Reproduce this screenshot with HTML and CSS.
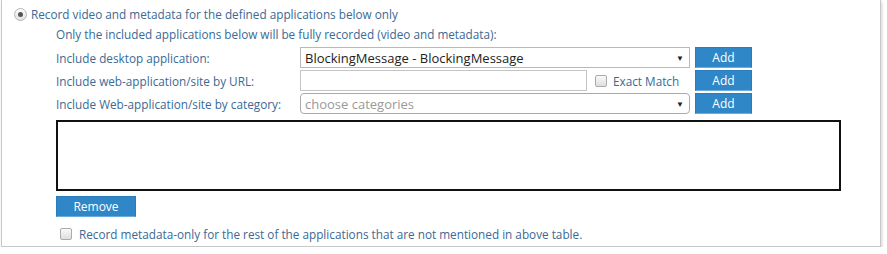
FILE: index.html
```html
<!DOCTYPE html>
<html lang="en">
<head>
  <meta charset="UTF-8" />
  <title>Recording settings</title>
  <link rel="stylesheet" href="styles.css">
</head>
<body>
  <div class="panel">
    <label class="option">
      <span class="radio"><span class="dot"></span></span>
      Record video and metadata for the defined applications below only
    </label>

    <div class="section">
      <p class="note">Only the included applications below will be fully recorded (video and metadata):</p>

      <div class="row">
        <span class="label">Include desktop application:</span>
        <div class="select">
          <span>BlockingMessage - BlockingMessage</span>
          <span class="arrow">&#9660;</span>
        </div>
        <button class="btn add">Add</button>
      </div>

      <div class="row">
        <span class="label">Include web-application/site by URL:</span>
        <input type="text" class="url" />
        <label class="exact"><span class="check"></span>Exact Match</label>
        <button class="btn add">Add</button>
      </div>

      <div class="row">
        <span class="label">Include Web-application/site by category:</span>
        <div class="select rounded">
          <span class="placeholder">choose categories</span>
          <span class="arrow">&#9660;</span>
        </div>
        <button class="btn add">Add</button>
      </div>

      <div class="list"></div>

      <button class="btn remove">Remove</button>

      <label class="meta">
        <span class="check"></span>
        Record metadata-only for the rest of the applications that are not mentioned in above table.
      </label>
    </div>
  </div>
</body>
</html>
```

FILE: styles.css
```css
body {
  margin: 0;
  background: #fff;
  font-family: 'Open Sans', sans-serif;
  font-size: 11.75px;
  color: #3a6a95;
}

.panel {
  margin-left: 1px;
  width: 880px;
  height: 247px;
  box-sizing: border-box;
  border: 1px solid #c8c8c8;
  border-top: none;
  box-shadow: 1px 2px 3px rgba(0, 0, 0, 0.18);
  padding-top: 5px;
}

.option {
  display: flex;
  align-items: center;
  height: 18px;
  padding-left: 12px;
  white-space: nowrap;
}

.radio {
  width: 11px;
  height: 11px;
  border: 1px solid #b5b5b5;
  border-radius: 50%;
  background: linear-gradient(#fdfdfd, #e2e2e2);
  display: flex;
  align-items: center;
  justify-content: center;
  margin-right: 4px;
}

.dot {
  width: 5px;
  height: 5px;
  border-radius: 50%;
  background: #555;
}

.section {
  padding-left: 54px;
}

.note {
  margin: 2px 0 4px;
  height: 18px;
  line-height: 18px;
}

.row {
  display: flex;
  align-items: center;
  height: 21px;
  margin-bottom: 2px;
}

.label {
  width: 244px;
  flex: none;
  white-space: nowrap;
}

.select {
  width: 390px;
  height: 21px;
  box-sizing: border-box;
  border: 1px solid #b9b9b9;
  display: flex;
  align-items: center;
  justify-content: space-between;
  padding: 0 5px 0 4px;
  color: #222;
  font-size: 13px;
}

.select.rounded {
  border-radius: 4px;
  border-color: #aaa;
}

.placeholder {
  color: #999;
}

.arrow {
  font-size: 8px;
  color: #222;
}

.url {
  width: 287px;
  height: 21px;
  box-sizing: border-box;
  border: 1px solid #c4c4c4;
  margin: 0;
  padding: 0 4px;
}

.exact {
  display: flex;
  align-items: center;
  width: 103px;
  padding-left: 8px;
  box-sizing: border-box;
  white-space: nowrap;
}

.check {
  width: 10px;
  height: 10px;
  border: 1px solid #aaa;
  border-radius: 2px;
  background: linear-gradient(#fafafa, #dedede);
  margin-right: 6px;
  flex: none;
}

.btn {
  background: #2f87c8;
  color: #fff;
  border: 1px solid #2a7cba;
  border-bottom-color: #6aaedf;
  font-family: 'Open Sans', sans-serif;
  font-size: 12px;
  height: 21px;
  padding: 0;
  margin: 0;
}

.add {
  width: 57px;
  margin-left: 5px;
}

.list {
  width: 785px;
  height: 71px;
  box-sizing: border-box;
  border: 2px solid #111;
  margin-top: 6px;
}

.remove {
  width: 80px;
  margin-top: 5px;
}

.meta {
  display: flex;
  align-items: center;
  margin-top: 9px;
  padding-left: 4px;
  white-space: nowrap;
}

.meta .check {
  margin-right: 7px;
}
```
